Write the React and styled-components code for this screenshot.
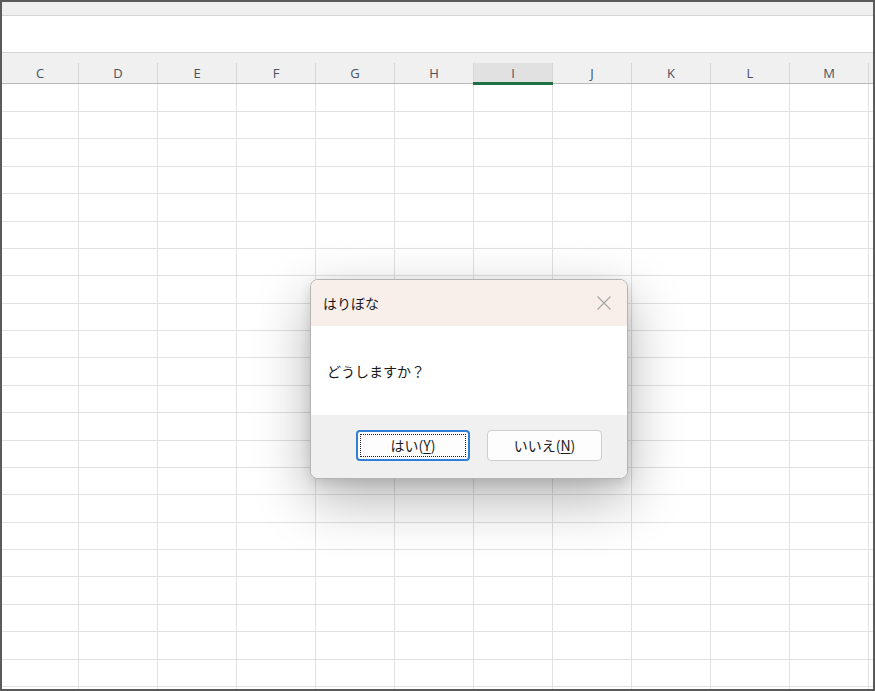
import React from 'react';
import styled, { createGlobalStyle } from 'styled-components';

const GlobalStyle = createGlobalStyle`
    html, body {
        margin: 0;
        padding: 0;
        background: #fff;
    }
`;

const columns = ['C', 'D', 'E', 'F', 'G', 'H', 'I', 'J', 'K', 'L', 'M', ''];
const selectedColumn = 'I';

// row lines fall every ~27.38px in the screenshot
const rowHeights = (() => {
    const heights = [28];
    let prev = 111;
    for (let k = 1; k < 23; k++) {
        const next = Math.round(111 + k * 27.38);
        heights.push(next - prev);
        prev = next;
    }
    return heights;
})();

const gridTemplate = '77px repeat(10, 79px) 1fr';

function App() {
    return (
        <>
            <GlobalStyle />
            <Frame>
                <TopStrip />
                <FormulaArea />
                <HeaderRow>
                    {columns.map((c, i) => (
                        <HeaderCell key={i} $selected={c === selectedColumn}>
                            {c}
                        </HeaderCell>
                    ))}
                </HeaderRow>
                <Sheet>
                    {rowHeights.map((h, r) => (
                        <Row key={r} $h={h}>
                            {columns.map((c, i) => (
                                <Cell key={i} />
                            ))}
                        </Row>
                    ))}
                </Sheet>

                <Dialog>
                    <TitleBar>
                        <Title>はりぼな</Title>
                        <CloseButton aria-label="close">
                            <svg width="16" height="16" viewBox="0 0 16 16">
                                <path d="M1.5 1.5 L14.5 14.5 M14.5 1.5 L1.5 14.5" stroke="#a8a8a8" strokeWidth="1.2" fill="none" />
                            </svg>
                        </CloseButton>
                    </TitleBar>
                    <Body>どうしますか？</Body>
                    <Footer>
                        <DialogButton $focused>
                            はい(<u>Y</u>)
                        </DialogButton>
                        <DialogButton>
                            いいえ(<u>N</u>)
                        </DialogButton>
                    </Footer>
                </Dialog>
            </Frame>
        </>
    );
}

const Frame = styled.div`
    position: relative;
    width: 875px;
    height: 691px;
    box-sizing: border-box;
    border: 2px solid #5a5a5a;
    overflow: hidden;
    background: #fff;
    display: flex;
    flex-direction: column;
`;

const TopStrip = styled.div`
    height: 13px;
    flex-shrink: 0;
    background: #efefef;
    border-bottom: 1px solid #d4d4d4;
`;

const FormulaArea = styled.div`
    height: 36px;
    flex-shrink: 0;
    background: #fff;
    border-bottom: 1px solid #d4d4d4;
`;

const HeaderRow = styled.div`
    display: grid;
    grid-template-columns: ${gridTemplate};
    height: 31px;
    flex-shrink: 0;
    box-sizing: border-box;
    padding-top: 10px;
    background: #f0f0f0;
    border-bottom: 1px solid #b9b9b9;
`;

const HeaderCell = styled.div`
    position: relative;
    display: flex;
    align-items: center;
    justify-content: center;
    font-family: "Open Sans", "Liberation Sans", sans-serif;
    font-size: 13px;
    color: #4a5160;
    background: ${(p) => (p.$selected ? '#e1e1e1' : 'transparent')};
    border-right: 1px solid #d6d6d6;
    box-sizing: border-box;

    &:last-child {
        border-right: none;
    }

    &::after {
        content: '';
        display: ${(p) => (p.$selected ? 'block' : 'none')};
        position: absolute;
        left: -1px;
        right: -1px;
        bottom: -2px;
        height: 3px;
        background: #1e7145;
    }
`;

const Sheet = styled.div`
    flex: 1;
    overflow: hidden;
`;

const Row = styled.div`
    display: grid;
    grid-template-columns: ${gridTemplate};
    height: ${(p) => p.$h}px;
    box-sizing: border-box;
    border-bottom: 1px solid #e1e1e1;
`;

const Cell = styled.div`
    border-right: 1px solid #e1e1e1;

    &:last-child {
        border-right: none;
    }
`;

const Dialog = styled.div`
    position: absolute;
    left: 308px;
    top: 277px;
    width: 318px;
    height: 200px;
    box-sizing: border-box;
    border: 1px solid #b4b4b4;
    border-radius: 8px;
    overflow: hidden;
    display: flex;
    flex-direction: column;
    background: #fff;
    box-shadow: 0 20px 56px rgba(0, 0, 0, 0.3), 0 4px 12px rgba(0, 0, 0, 0.12);
    font-family: "Noto Sans CJK JP", "Noto Sans", sans-serif;
    color: #1a1a1a;
`;

const TitleBar = styled.div`
    height: 46px;
    flex-shrink: 0;
    display: flex;
    align-items: center;
    justify-content: space-between;
    padding: 0 14px 0 12px;
    background: #f9efea;
`;

const Title = styled.span`
    font-size: 14px;
`;

const CloseButton = styled.div`
    display: flex;
    align-items: center;
    justify-content: center;
    width: 18px;
    height: 18px;
`;

const Body = styled.div`
    flex: 1;
    display: flex;
    align-items: center;
    padding: 0 16px;
    font-size: 14px;
    background: #fff;
`;

const Footer = styled.div`
    height: 63px;
    flex-shrink: 0;
    display: flex;
    align-items: center;
    justify-content: flex-end;
    gap: 17px;
    padding: 0 25px 3px 0;
    box-sizing: border-box;
    background: #f0f0f0;
`;

const DialogButton = styled.button`
    width: ${(p) => (p.$focused ? '114px' : '115px')};
    height: 31px;
    box-sizing: border-box;
    background: #fdfdfd;
    border: ${(p) => (p.$focused ? '2px solid #2f7fd7' : '1px solid #cdcdcd')};
    border-radius: 4px;
    font-family: "Noto Sans CJK JP", "Noto Sans", sans-serif;
    font-size: 14px;
    color: #1a1a1a;
    padding: 0;
    outline: ${(p) => (p.$focused ? '1px dotted #222' : 'none')};
    outline-offset: -5px;

    u {
        text-underline-offset: 2px;
    }
`;

export default App;
